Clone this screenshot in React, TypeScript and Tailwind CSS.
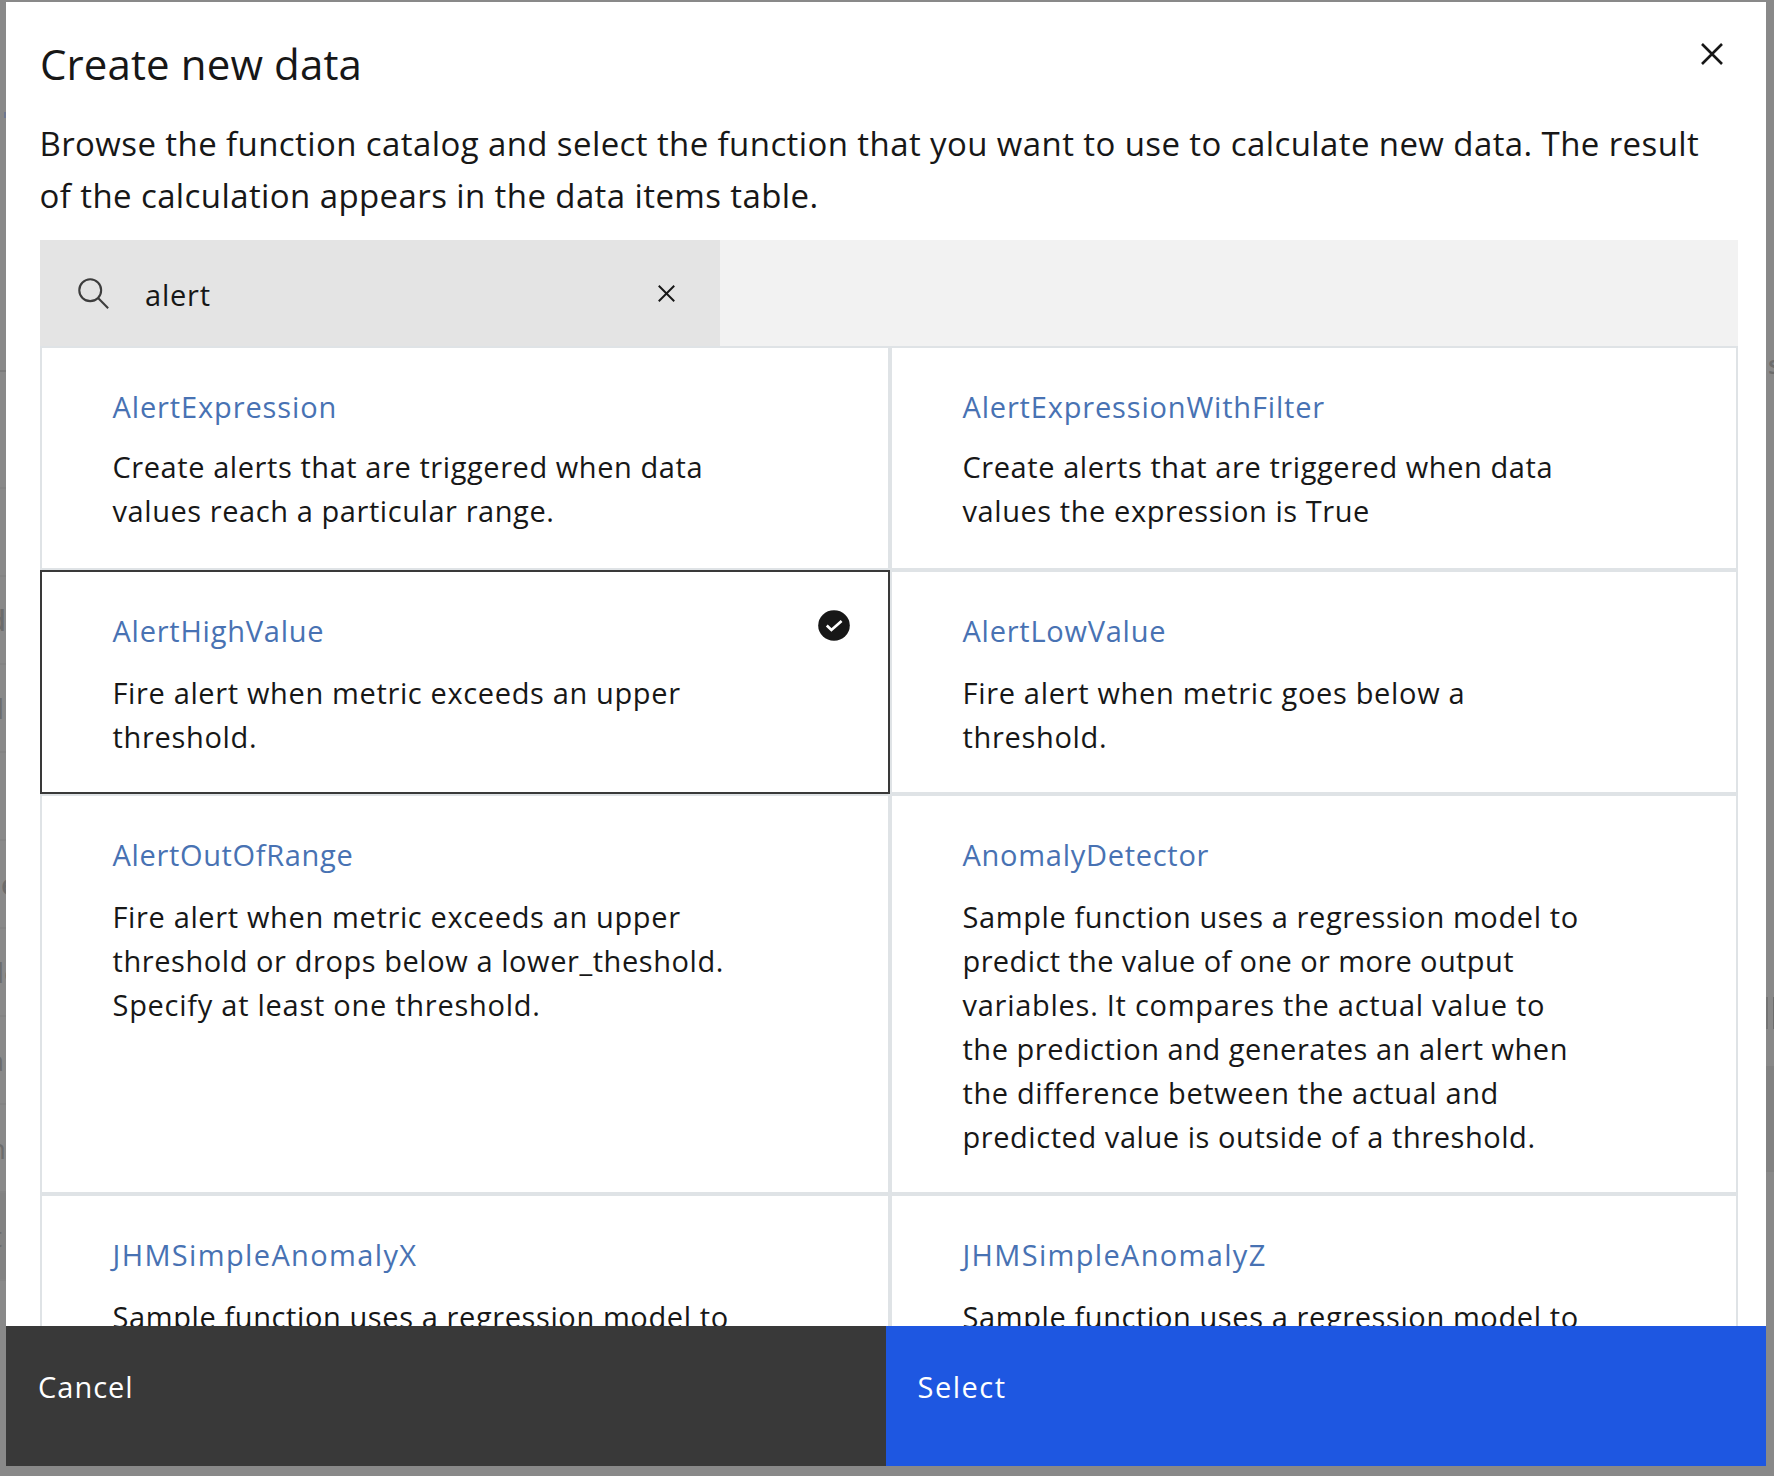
import type { ReactNode } from "react";

type Line = { text: string; tracking: string };
type FunctionTile = {
  name: string;
  tracking: string;
  lines: Line[];
  gap?: string;
  selected?: boolean;
};

const rows: { height: string; tiles: FunctionTile[] }[] = [
  {
    height: "h-[224px]",
    tiles: [
      {
        name: "AlertExpression",
        tracking: "tracking-[0.88px]",
        gap: "mt-4",
        lines: [
          { text: "Create alerts that are triggered when data", tracking: "tracking-[0.57px]" },
          { text: "values reach a particular range.", tracking: "tracking-[0.57px]" },
        ],
      },
      {
        name: "AlertExpressionWithFilter",
        tracking: "tracking-[0.83px]",
        gap: "mt-4",
        lines: [
          { text: "Create alerts that are triggered when data", tracking: "tracking-[0.57px]" },
          { text: "values the expression is True", tracking: "tracking-[0.57px]" },
        ],
      },
    ],
  },
  {
    height: "h-[224px]",
    tiles: [
      {
        name: "AlertHighValue",
        tracking: "tracking-[0.76px]",
        selected: true,
        lines: [
          { text: "Fire alert when metric exceeds an upper", tracking: "tracking-[0.64px]" },
          { text: "threshold.", tracking: "tracking-[0.68px]" },
        ],
      },
      {
        name: "AlertLowValue",
        tracking: "tracking-[0.75px]",
        lines: [
          { text: "Fire alert when metric goes below a", tracking: "tracking-[0.68px]" },
          { text: "threshold.", tracking: "tracking-[0.68px]" },
        ],
      },
    ],
  },
  {
    height: "h-[400px]",
    tiles: [
      {
        name: "AlertOutOfRange",
        tracking: "tracking-[0.66px]",
        lines: [
          { text: "Fire alert when metric exceeds an upper", tracking: "tracking-[0.64px]" },
          { text: "threshold or drops below a lower_theshold.", tracking: "tracking-[0.57px]" },
          { text: "Specify at least one threshold.", tracking: "tracking-[0.73px]" },
        ],
      },
      {
        name: "AnomalyDetector",
        tracking: "tracking-[0.72px]",
        lines: [
          { text: "Sample function uses a regression model to", tracking: "tracking-[0.6px]" },
          { text: "predict the value of one or more output", tracking: "tracking-[0.39px]" },
          { text: "variables. It compares the actual value to", tracking: "tracking-[0.73px]" },
          { text: "the prediction and generates an alert when", tracking: "tracking-[0.52px]" },
          { text: "the difference between the actual and", tracking: "tracking-[0.61px]" },
          { text: "predicted value is outside of a threshold.", tracking: "tracking-[0.56px]" },
        ],
      },
    ],
  },
  {
    height: "h-[224px]",
    tiles: [
      {
        name: "JHMSimpleAnomalyX",
        tracking: "tracking-[1.36px]",
        lines: [{ text: "Sample function uses a regression model to", tracking: "tracking-[0.6px]" }],
      },
      {
        name: "JHMSimpleAnomalyZ",
        tracking: "tracking-[1.32px]",
        lines: [{ text: "Sample function uses a regression model to", tracking: "tracking-[0.6px]" }],
      },
    ],
  },
];

function CrossIcon({ className, width }: { className: string; width: number }) {
  return (
    <svg viewBox="0 0 22 22" className={className} fill="none" stroke="currentColor" strokeWidth={width}>
      <path d="M1 1 21 21M21 1 1 21" />
    </svg>
  );
}

function SearchIcon() {
  return (
    <svg viewBox="0 0 16 16" className="h-[35px] w-[35px] shrink-0" fill="none" stroke="#3d3d3d" strokeWidth="0.95">
      <circle cx="6.5" cy="6.5" r="5" />
      <path d="M10.1 10.1 14.7 14.7" />
    </svg>
  );
}

function CheckIcon() {
  return (
    <svg viewBox="0 0 32 31" className="h-[31px] w-8">
      <ellipse cx="16" cy="15.5" rx="15.8" ry="15.2" fill="#171717" />
      <path d="M8.8 15.6 13.4 20 23.6 11" fill="none" stroke="#fff" strokeWidth="2.7" />
    </svg>
  );
}

function Tile({ tile }: { tile: FunctionTile }) {
  return (
    <div
      className={`relative h-full border-2 bg-white pl-[70.5px] pt-[37px] leading-[44px] ${
        tile.selected ? "border-[#393939]" : "border-[#dfe3e6]"
      }`}
    >
      <div className={`text-[#4872b3] ${tile.tracking}`}>{tile.name}</div>
      <div className={tile.gap ?? "mt-[18px]"}>
        {tile.lines.map((line) => (
          <div key={line.text} className={`whitespace-nowrap ${line.tracking}`}>
            {line.text}
          </div>
        ))}
      </div>
      {tile.selected && (
        <div className="absolute right-[38px] top-[37.5px]">
          <CheckIcon />
        </div>
      )}
    </div>
  );
}

function BackdropRow({ className = "", children }: { className?: string; children?: ReactNode }) {
  return (
    <div className={`flex h-[88px] items-center overflow-hidden border-b-2 border-[#848484] ${className}`}>{children}</div>
  );
}

export default function App() {
  return (
    <div className="flex h-[1476px] w-[1774px] overflow-hidden bg-[#898989] font-['Open_Sans',sans-serif] text-[29px] text-[#171717]">
      <div className="w-[6px] shrink-0 overflow-hidden text-[28px] text-[#6c6c6c]">
        <div className="h-[112px]" />
        <div className="ml-1 h-[6px] bg-[#6f7891]" />
        <div className="h-[254px] border-b-2 border-[#7b7b7b]" />
        <div className="h-[29px]" />
        <BackdropRow />
        <BackdropRow />
        <BackdropRow className="justify-end font-semibold">d</BackdropRow>
        <BackdropRow className="justify-end pr-0.5">l</BackdropRow>
        <BackdropRow />
        <BackdropRow className="pl-px font-semibold">e</BackdropRow>
        <BackdropRow>
          <span className="-ml-[3px]">lo</span>
        </BackdropRow>
        <BackdropRow className="justify-end pr-0.5">a</BackdropRow>
        <BackdropRow className="justify-end">n</BackdropRow>
        <BackdropRow className="justify-end bg-[#828282] pr-1">t</BackdropRow>
      </div>

      <main className="mt-0.5 flex h-[1464px] w-[1760px] shrink-0 flex-col bg-white">
        <header className="flex h-[116px] shrink-0 items-start justify-between pl-[32px] pr-[43px]">
          <h1 className="pl-0.5 pt-[38px] text-[42px] leading-[48px] tracking-[0.12px]">Create new data</h1>
          <button className="mt-[40.5px]" aria-label="Close">
            <CrossIcon className="h-[22px] w-[22px]" width={2.6} />
          </button>
        </header>
        <div className="h-[122px] shrink-0 whitespace-nowrap pl-[33.5px] text-[33px] leading-[52px]">
          <p className="tracking-[0.4px]">
            Browse the function catalog and select the function that you want to use to calculate new data. The result
          </p>
          <p className="tracking-[0.4px]">of the calculation appears in the data items table.</p>
        </div>

        <div className="ml-[34px] flex h-[106px] w-[1698px] shrink-0 bg-[#f2f2f2]">
          <div className="flex w-[680px] items-center bg-[#e4e4e4] pl-[36px]">
            <SearchIcon />
            <span className="ml-[34px] flex-1 pt-1 leading-[44px] tracking-[0.8px]">alert</span>
            <CrossIcon className="mr-[45px] h-[17px] w-[17px]" width={2.5} />
          </div>
        </div>

        <div className="ml-[34px] w-[1698px] flex-1 overflow-hidden">
          <div className="h-[980px] overflow-hidden">
            {rows.map((row) => (
              <div key={row.tiles[0].name} className={`grid grid-cols-[850px_848px] ${row.height}`}>
                {row.tiles.map((tile) => (
                  <Tile key={tile.name} tile={tile} />
                ))}
              </div>
            ))}
          </div>
        </div>

        <footer className="grid h-[140px] shrink-0 grid-cols-2 text-left leading-[44px] text-white">
          <button className="flex items-start bg-[#393939] pl-[32px] pt-[39px] tracking-[1px]">Cancel</button>
          <button className="flex items-start bg-[#1e57e1] pl-[31.5px] pt-[39px] tracking-[1.5px]">Select</button>
        </footer>
      </main>

      <div className="w-2 shrink-0 overflow-hidden text-[26px] font-semibold text-[#6c6c6c]">
        <div className="h-[340px]" />
        <div className="h-[50px] pl-[2px] leading-[48px]">s</div>
        <div className="h-[607px]" />
        <div className="flex h-8 justify-between">
          <div className="w-0.5 bg-[#747474]" />
          <div className="w-px bg-[#6c6c6c]" />
        </div>
        <div className="h-[37px]" />
        <div className="h-[106px] bg-[#828282]" />
      </div>
    </div>
  );
}
